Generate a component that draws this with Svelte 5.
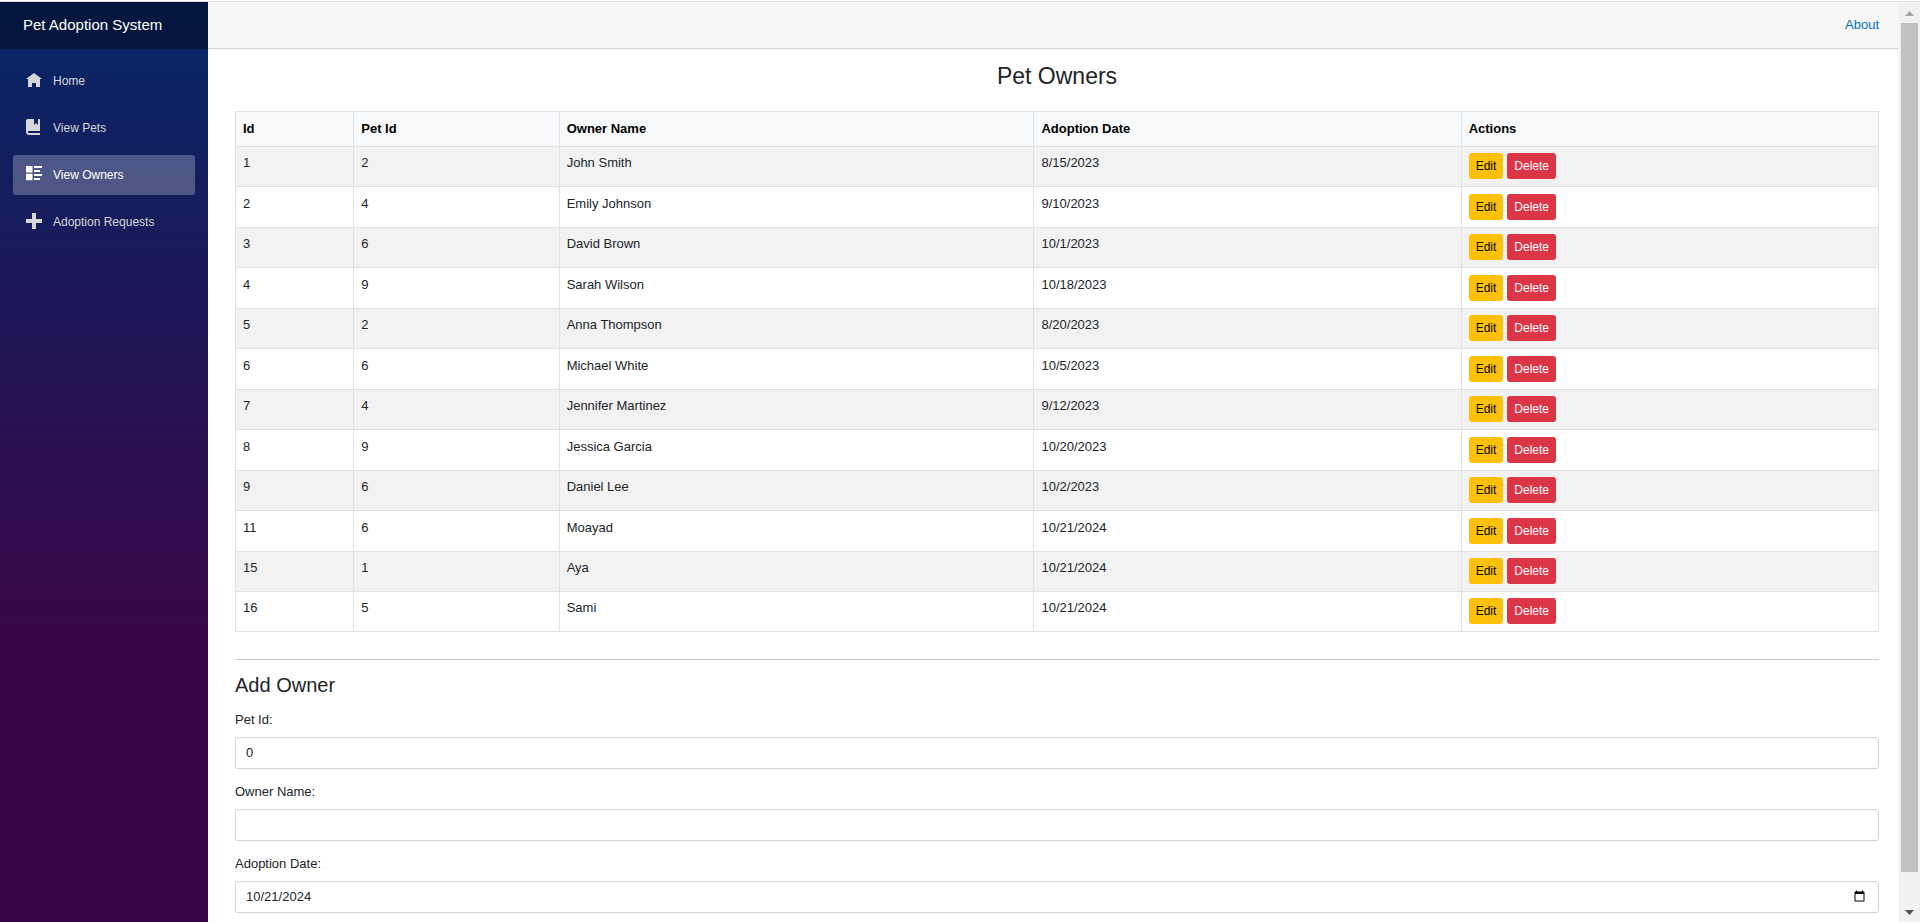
<script>
  const nav = [
    { label: 'Home', box: '0 -0.5 8 8', path: 'M4 0l-4 3h1v4h2v-2h2v2h2v-4.03l1 .03-4-3z' },
    {
      label: 'View Pets',
      box: '0 0 8 8',
      path: 'M1 0c-.07 0-.13.01-.19.03-.39.08-.7.39-.78.78-.03.06-.03.12-.03.19v5.5c0 .83.67 1.5 1.5 1.5h5.5v-1h-5.5c-.28 0-.5-.22-.5-.5s.22-.5.5-.5h5.5v-5.5c0-.28-.22-.5-.5-.5h-.5v3l-1-1-1 1v-3h-3z'
    },
    {
      label: 'View Owners',
      box: '0 0 8 8',
      path: 'M0 0v3.25h3.25v-3.25h-3.25zm4 0v1h4v-1h-4zm0 2v1h3v-1h-3zm-4 1.85v3.25h3.25v-3.25h-3.25zm4 .15v1h4v-1h-4zm0 2v1h3v-1h-3z',
      active: true
    },
    { label: 'Adoption Requests', box: '0 0 8 8', path: 'M3 0v3h-3v2h3v3h2v-3h3v-2h-3v-3h-2z' }
  ];

  const owners = [
    [1, 2, 'John Smith', '8/15/2023'],
    [2, 4, 'Emily Johnson', '9/10/2023'],
    [3, 6, 'David Brown', '10/1/2023'],
    [4, 9, 'Sarah Wilson', '10/18/2023'],
    [5, 2, 'Anna Thompson', '8/20/2023'],
    [6, 6, 'Michael White', '10/5/2023'],
    [7, 4, 'Jennifer Martinez', '9/12/2023'],
    [8, 9, 'Jessica Garcia', '10/20/2023'],
    [9, 6, 'Daniel Lee', '10/2/2023'],
    [11, 6, 'Moayad', '10/21/2024'],
    [15, 1, 'Aya', '10/21/2024'],
    [16, 5, 'Sami', '10/21/2024']
  ];

  let petId = $state(0);
  let ownerName = $state('');
  let adoptionDate = $state('2024-10-21');
</script>

<div class="page">
  <aside class="sidebar">
    <div class="brand"><a href="#home">Pet Adoption System</a></div>
    <nav>
      {#each nav as item}
        <a href="#nav" class:active={item.active}>
          <svg viewBox={item.box} aria-hidden="true"><path d={item.path} /></svg>
          {item.label}
        </a>
      {/each}
    </nav>
  </aside>

  <main>
    <header><a href="#about">About</a></header>
    <article>
      <h1>Pet Owners</h1>
      <table>
        <thead>
          <tr>
            <th class="id">Id</th>
            <th class="pet">Pet Id</th>
            <th class="name">Owner Name</th>
            <th class="date">Adoption Date</th>
            <th>Actions</th>
          </tr>
        </thead>
        <tbody>
          {#each owners as [id, pet, name, date]}
            <tr>
              <td>{id}</td>
              <td>{pet}</td>
              <td>{name}</td>
              <td>{date}</td>
              <td>
                <div class="actions">
                  <button class="edit" type="button">Edit</button>
                  <button class="delete" type="button">Delete</button>
                </div>
              </td>
            </tr>
          {/each}
        </tbody>
      </table>
      <hr />
      <h2>Add Owner</h2>
      <form>
        <label for="pet-id">Pet Id:</label>
        <input id="pet-id" type="number" bind:value={petId} />
        <label for="owner-name">Owner Name:</label>
        <input id="owner-name" type="text" bind:value={ownerName} />
        <label for="adoption-date">Adoption Date:</label>
        <input id="adoption-date" type="date" bind:value={adoptionDate} />
      </form>
    </article>
  </main>

  <div class="scrollbar" aria-hidden="true">
    <svg viewBox="0 0 9 5"><path d="M0 5L4.5 0L9 5z" fill="#a3a3a3" /></svg>
    <div class="thumb"></div>
    <svg viewBox="0 0 9 5"><path d="M0 0L4.5 5L9 0z" fill="#505050" /></svg>
  </div>
</div>

<style>
  :global(body) {
    margin: 0;
    background: #fff;
  }

  .page,
  .page * {
    box-sizing: border-box;
  }

  .page {
    display: flex;
    height: 100vh;
    overflow: hidden;
    padding-top: 1px;
    font-family: 'Liberation Sans', Arial, sans-serif;
    font-size: 13px;
    line-height: 20px;
    color: #212529;
  }

  .page > * {
    border-top: 1px solid #dee1e6;
  }

  a {
    text-decoration: none;
  }

  .sidebar {
    flex: 0 0 208px;
    background: linear-gradient(180deg, #052767 0%, #3a0647 70%);
  }

  .brand {
    display: flex;
    align-items: center;
    height: 47px;
    padding: 0 23px 2px;
    background: rgba(0, 0, 0, 0.4);
    font-size: 15px;
  }

  .brand a {
    color: #fff;
  }

  nav {
    display: flex;
    flex-direction: column;
    gap: 7px;
    padding: 12px 13px;
  }

  nav a {
    display: flex;
    align-items: center;
    gap: 11px;
    height: 40px;
    padding-left: 13px;
    border-radius: 3px;
    font-size: 12px;
    color: #d7d7d7;
  }

  nav a.active {
    background: rgba(255, 255, 255, 0.25);
    color: #fff;
  }

  nav svg {
    width: 16px;
    height: 16px;
    margin-bottom: 2px;
    fill: currentColor;
  }

  main {
    flex: 1;
    min-width: 0;
  }

  header {
    display: flex;
    align-items: center;
    justify-content: flex-end;
    height: 47px;
    padding: 0 20px;
    background: #f7f7f7;
    border-bottom: 1px solid #d6d5d5;
  }

  header a {
    color: #0071c1;
  }

  article {
    padding: 13px 20px 0 27px;
  }

  h1,
  h2 {
    margin: 0;
    font-weight: 400;
  }

  h1 {
    margin-bottom: 21px;
    font-size: 23px;
    line-height: 28px;
    text-align: center;
  }

  h2 {
    margin-bottom: 13px;
    font-size: 20px;
    line-height: 24px;
  }

  table {
    width: 100%;
    border-collapse: collapse;
    table-layout: fixed;
  }

  th,
  td {
    padding: 7px 7px 0;
    border: 1px solid #dee2e6;
    text-align: left;
    vertical-align: top;
  }

  th {
    height: 35px;
    background: #f8f9fa;
    color: #000;
  }

  th.id {
    width: 7.2%;
  }

  th.pet {
    width: 12.5%;
  }

  th.name {
    width: 28.9%;
  }

  th.date {
    width: 26%;
  }

  td {
    height: 40px;
    padding-top: 6px;
  }

  tbody tr:nth-child(odd) {
    background: #f2f2f2;
  }

  tbody tr:nth-child(even):not(:last-child) td {
    height: 41px;
    padding-top: 7px;
  }

  .actions {
    display: flex;
    gap: 4px;
  }

  button {
    height: 26px;
    padding: 0 7px;
    border: 0;
    border-radius: 3px;
    font-family: inherit;
    font-size: 12px;
  }

  .edit {
    background: #ffc107;
    color: #000;
  }

  .delete {
    background: #dc3545;
    color: #fff;
  }

  hr {
    margin: 27px 0 13px;
    border: 0;
    border-top: 1px solid #c8c9ca;
  }

  label {
    display: block;
    margin-bottom: 7px;
  }

  input {
    display: block;
    width: 100%;
    height: 32px;
    margin-bottom: 13px;
    padding: 0 10px 2px;
    border: 1px solid #ced4da;
    border-radius: 3px;
    background: #fff;
    color: #212529;
    font-family: inherit;
    font-size: 13px;
  }

  input::-webkit-datetime-edit-month-field,
  input::-webkit-datetime-edit-day-field,
  input::-webkit-datetime-edit-year-field {
    padding: 0;
  }

  .scrollbar {
    display: flex;
    flex: 0 0 21px;
    flex-direction: column;
    align-items: center;
    gap: 7px;
    padding: 9px 2px 7px;
    background: #f1f1f1;
  }

  .scrollbar svg {
    width: 9px;
    height: 5px;
  }

  .thumb {
    width: 17px;
    height: 849px;
    max-height: 94%;
    margin-bottom: auto;
    background: #c1c1c1;
  }
</style>
